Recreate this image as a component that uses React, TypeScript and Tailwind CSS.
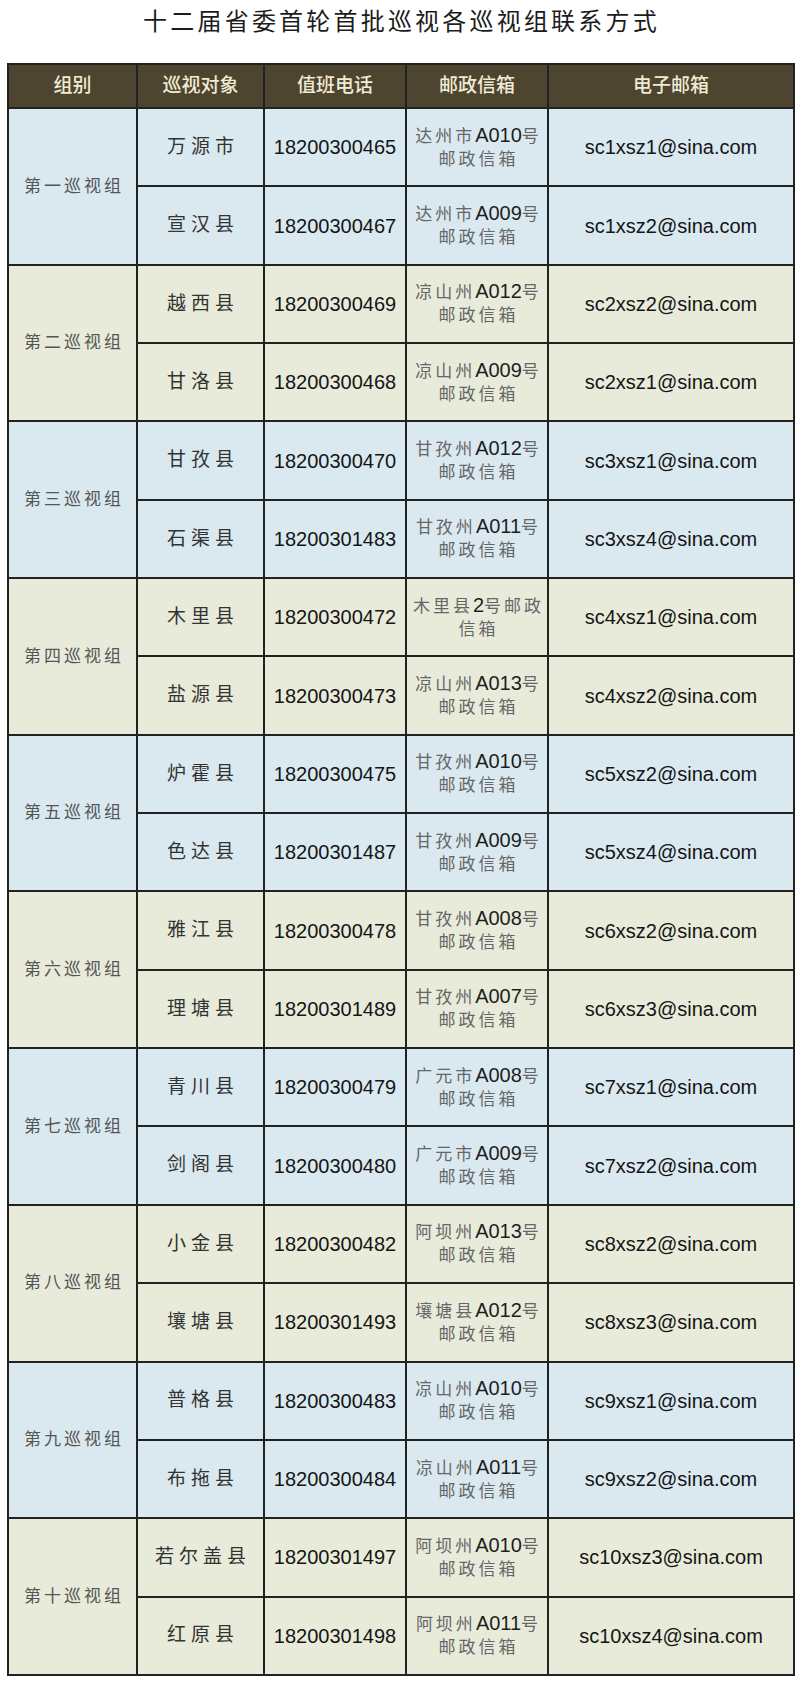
const groups = [
  {
    name: "第一巡视组",
    rows: [
      ["万源市", "18200300465", ["达州市A010号", "邮政信箱"], "sc1xsz1@sina.com"],
      ["宣汉县", "18200300467", ["达州市A009号", "邮政信箱"], "sc1xsz2@sina.com"],
    ],
  },
  {
    name: "第二巡视组",
    rows: [
      ["越西县", "18200300469", ["凉山州A012号", "邮政信箱"], "sc2xsz2@sina.com"],
      ["甘洛县", "18200300468", ["凉山州A009号", "邮政信箱"], "sc2xsz1@sina.com"],
    ],
  },
  {
    name: "第三巡视组",
    rows: [
      ["甘孜县", "18200300470", ["甘孜州A012号", "邮政信箱"], "sc3xsz1@sina.com"],
      ["石渠县", "18200301483", ["甘孜州A011号", "邮政信箱"], "sc3xsz4@sina.com"],
    ],
  },
  {
    name: "第四巡视组",
    rows: [
      ["木里县", "18200300472", ["木里县2号邮政", "信箱"], "sc4xsz1@sina.com"],
      ["盐源县", "18200300473", ["凉山州A013号", "邮政信箱"], "sc4xsz2@sina.com"],
    ],
  },
  {
    name: "第五巡视组",
    rows: [
      ["炉霍县", "18200300475", ["甘孜州A010号", "邮政信箱"], "sc5xsz2@sina.com"],
      ["色达县", "18200301487", ["甘孜州A009号", "邮政信箱"], "sc5xsz4@sina.com"],
    ],
  },
  {
    name: "第六巡视组",
    rows: [
      ["雅江县", "18200300478", ["甘孜州A008号", "邮政信箱"], "sc6xsz2@sina.com"],
      ["理塘县", "18200301489", ["甘孜州A007号", "邮政信箱"], "sc6xsz3@sina.com"],
    ],
  },
  {
    name: "第七巡视组",
    rows: [
      ["青川县", "18200300479", ["广元市A008号", "邮政信箱"], "sc7xsz1@sina.com"],
      ["剑阁县", "18200300480", ["广元市A009号", "邮政信箱"], "sc7xsz2@sina.com"],
    ],
  },
  {
    name: "第八巡视组",
    rows: [
      ["小金县", "18200300482", ["阿坝州A013号", "邮政信箱"], "sc8xsz2@sina.com"],
      ["壤塘县", "18200301493", ["壤塘县A012号", "邮政信箱"], "sc8xsz3@sina.com"],
    ],
  },
  {
    name: "第九巡视组",
    rows: [
      ["普格县", "18200300483", ["凉山州A010号", "邮政信箱"], "sc9xsz1@sina.com"],
      ["布拖县", "18200300484", ["凉山州A011号", "邮政信箱"], "sc9xsz2@sina.com"],
    ],
  },
  {
    name: "第十巡视组",
    rows: [
      ["若尔盖县", "18200301497", ["阿坝州A010号", "邮政信箱"], "sc10xsz3@sina.com"],
      ["红原县", "18200301498", ["阿坝州A011号", "邮政信箱"], "sc10xsz4@sina.com"],
    ],
  },
] as const;

const cell = "border-2 border-[#222] text-center align-middle p-0";

// latin/number runs are set bigger and darker than the song-style chinese
function MailLine({ text }: { text: string }) {
  const parts = text.split(/([A-Z0-9]+)/).filter(Boolean);
  return (
    <div className="whitespace-nowrap">
      {parts.map((p, i) =>
        /^[A-Z0-9]+$/.test(p) ? (
          <span key={i} className="text-[20px] tracking-normal text-[#1e1e1e]">
            {p}
          </span>
        ) : (
          <span key={i}>{p}</span>
        ),
      )}
    </div>
  );
}

export default function App() {
  return (
    <div className="min-h-[1686px] w-[800px] bg-white font-['Liberation_Sans','Noto_Sans_CJK_SC',sans-serif]">
      <h1 className="h-[63px] pt-[6px] pl-[3px] text-center text-[24px] leading-[32px] font-normal tracking-[3.2px] text-[#1c1c1c]">
        十二届省委首轮首批巡视各巡视组联系方式
      </h1>

      <table className="ml-[7px] w-[786px] table-fixed border-collapse">
        <colgroup>
          <col className="w-[129px]" />
          <col className="w-[127px]" />
          <col className="w-[142px]" />
          <col className="w-[142px]" />
          <col className="w-[246px]" />
        </colgroup>
        <thead>
          <tr className="h-[44px] bg-[#4d4530] text-[19px] font-medium text-[#f1ead4]">
            <th className={cell + " font-medium"}>组别</th>
            <th className={cell + " font-medium"}>巡视对象</th>
            <th className={cell + " font-medium"}>值班电话</th>
            <th className={cell + " font-medium"}>邮政信箱</th>
            <th className={cell + " font-medium"}>电子邮箱</th>
          </tr>
        </thead>
        <tbody>
          {groups.map((g, gi) => {
            const bg = gi % 2 === 0 ? "bg-[#dae9f0]" : "bg-[#e8ebda]";
            return g.rows.map((r, ri) => (
              <tr key={g.name + ri} className={"h-[78.35px] " + bg}>
                {ri === 0 && (
                  <td
                    rowSpan={2}
                    className={cell + " pl-[3px] text-[17px] tracking-[3px] text-[#555]"}
                  >
                    {g.name}
                  </td>
                )}
                <td className={cell + " pl-[5px] text-[19px] tracking-[5px] text-[#333]"}>
                  {r[0]}
                </td>
                <td className={cell + " text-[20px] text-[#151515]"}>{r[1]}</td>
                <td className={cell + " pl-[3px] text-[17px] leading-[23px] tracking-[3px] text-[#666]"}>
                  <MailLine text={r[2][0]} />
                  <MailLine text={r[2][1]} />
                </td>
                <td className={cell + " text-[20px] text-[#151515]"}>{r[3]}</td>
              </tr>
            ));
          })}
        </tbody>
      </table>
    </div>
  );
}
